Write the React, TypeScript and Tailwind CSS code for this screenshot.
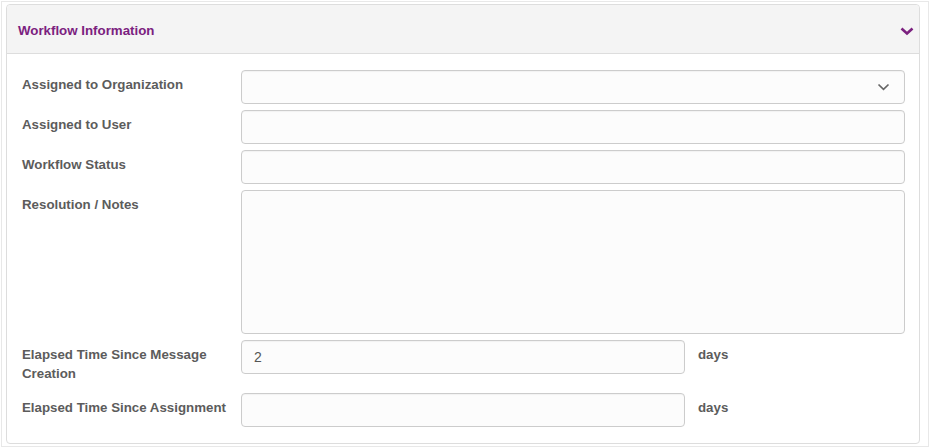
export default function App() {
  const label = 'text-[13.3px] font-bold leading-[19px] text-[#5c5c5c] pt-[5px]'
  const input = 'h-[34px] rounded-[4px] border border-[#cccccc] bg-[#fcfcfc] shadow-[inset_0_1px_1px_rgba(0,0,0,0.04)]'

  return (
    <div className="w-[930px] h-[448px] bg-white p-px" style={{ fontFamily: '"Liberation Sans", Arial, sans-serif' }}>
      <div className="h-full border border-[#e8e8e8] pl-[4px] pr-[8px] pt-[2px] pb-[2px]">
        <div className="h-[440px] rounded-[4px] border border-[#dddddd] bg-white">
          <div className="h-[49px] flex items-center justify-between pl-[11px] pr-[5px] pt-[3px] bg-[#f4f4f4] border-b border-[#dddddd] rounded-t-[4px]">
            <span className="text-[13.3px] font-bold text-[#7b217f]">Workflow Information</span>
            <svg width="14" height="10" viewBox="0 0 14 10">
              <path d="M1.5 2.5 L7 7.5 L12.5 2.5" fill="none" stroke="#7b217f" strokeWidth="2.6" />
            </svg>
          </div>

          <div className="pl-[15px] pr-[14px] pt-[16px]">
            <div className="flex">
              <div className={`w-[219px] shrink-0 ${label}`}>Assigned to Organization</div>
              <div className={`flex-1 flex items-center justify-end pr-[14px] ${input}`}>
                <svg width="13" height="8" viewBox="0 0 13 8">
                  <path d="M1.5 1.5 L6.5 6.3 L11.5 1.5" fill="none" stroke="#666666" strokeWidth="1.7" />
                </svg>
              </div>
            </div>

            <div className="flex mt-[6px]">
              <div className={`w-[219px] shrink-0 ${label}`}>Assigned to User</div>
              <div className={`flex-1 ${input}`} />
            </div>

            <div className="flex mt-[6px]">
              <div className={`w-[219px] shrink-0 ${label}`}>Workflow Status</div>
              <div className={`flex-1 ${input}`} />
            </div>

            <div className="flex mt-[6px]">
              <div className={`w-[219px] shrink-0 ${label}`}>Resolution / Notes</div>
              <div className="flex-1 h-[144px] rounded-[4px] border border-[#cccccc] bg-[#fcfcfc]" />
            </div>

            <div className="flex mt-[6px] h-[47px]">
              <div className={`w-[219px] shrink-0 ${label} pr-[20px]`}>Elapsed Time Since Message Creation</div>
              <div className={`w-[444px] flex items-center px-[12px] text-[14px] text-[#555555] ${input}`}>2</div>
              <div className={`ml-[13px] ${label}`}>days</div>
            </div>

            <div className="flex mt-[6px]">
              <div className={`w-[219px] shrink-0 ${label}`}>Elapsed Time Since Assignment</div>
              <div className={`w-[444px] ${input}`} />
              <div className={`ml-[13px] ${label}`}>days</div>
            </div>
          </div>
        </div>
      </div>
    </div>
  )
}
